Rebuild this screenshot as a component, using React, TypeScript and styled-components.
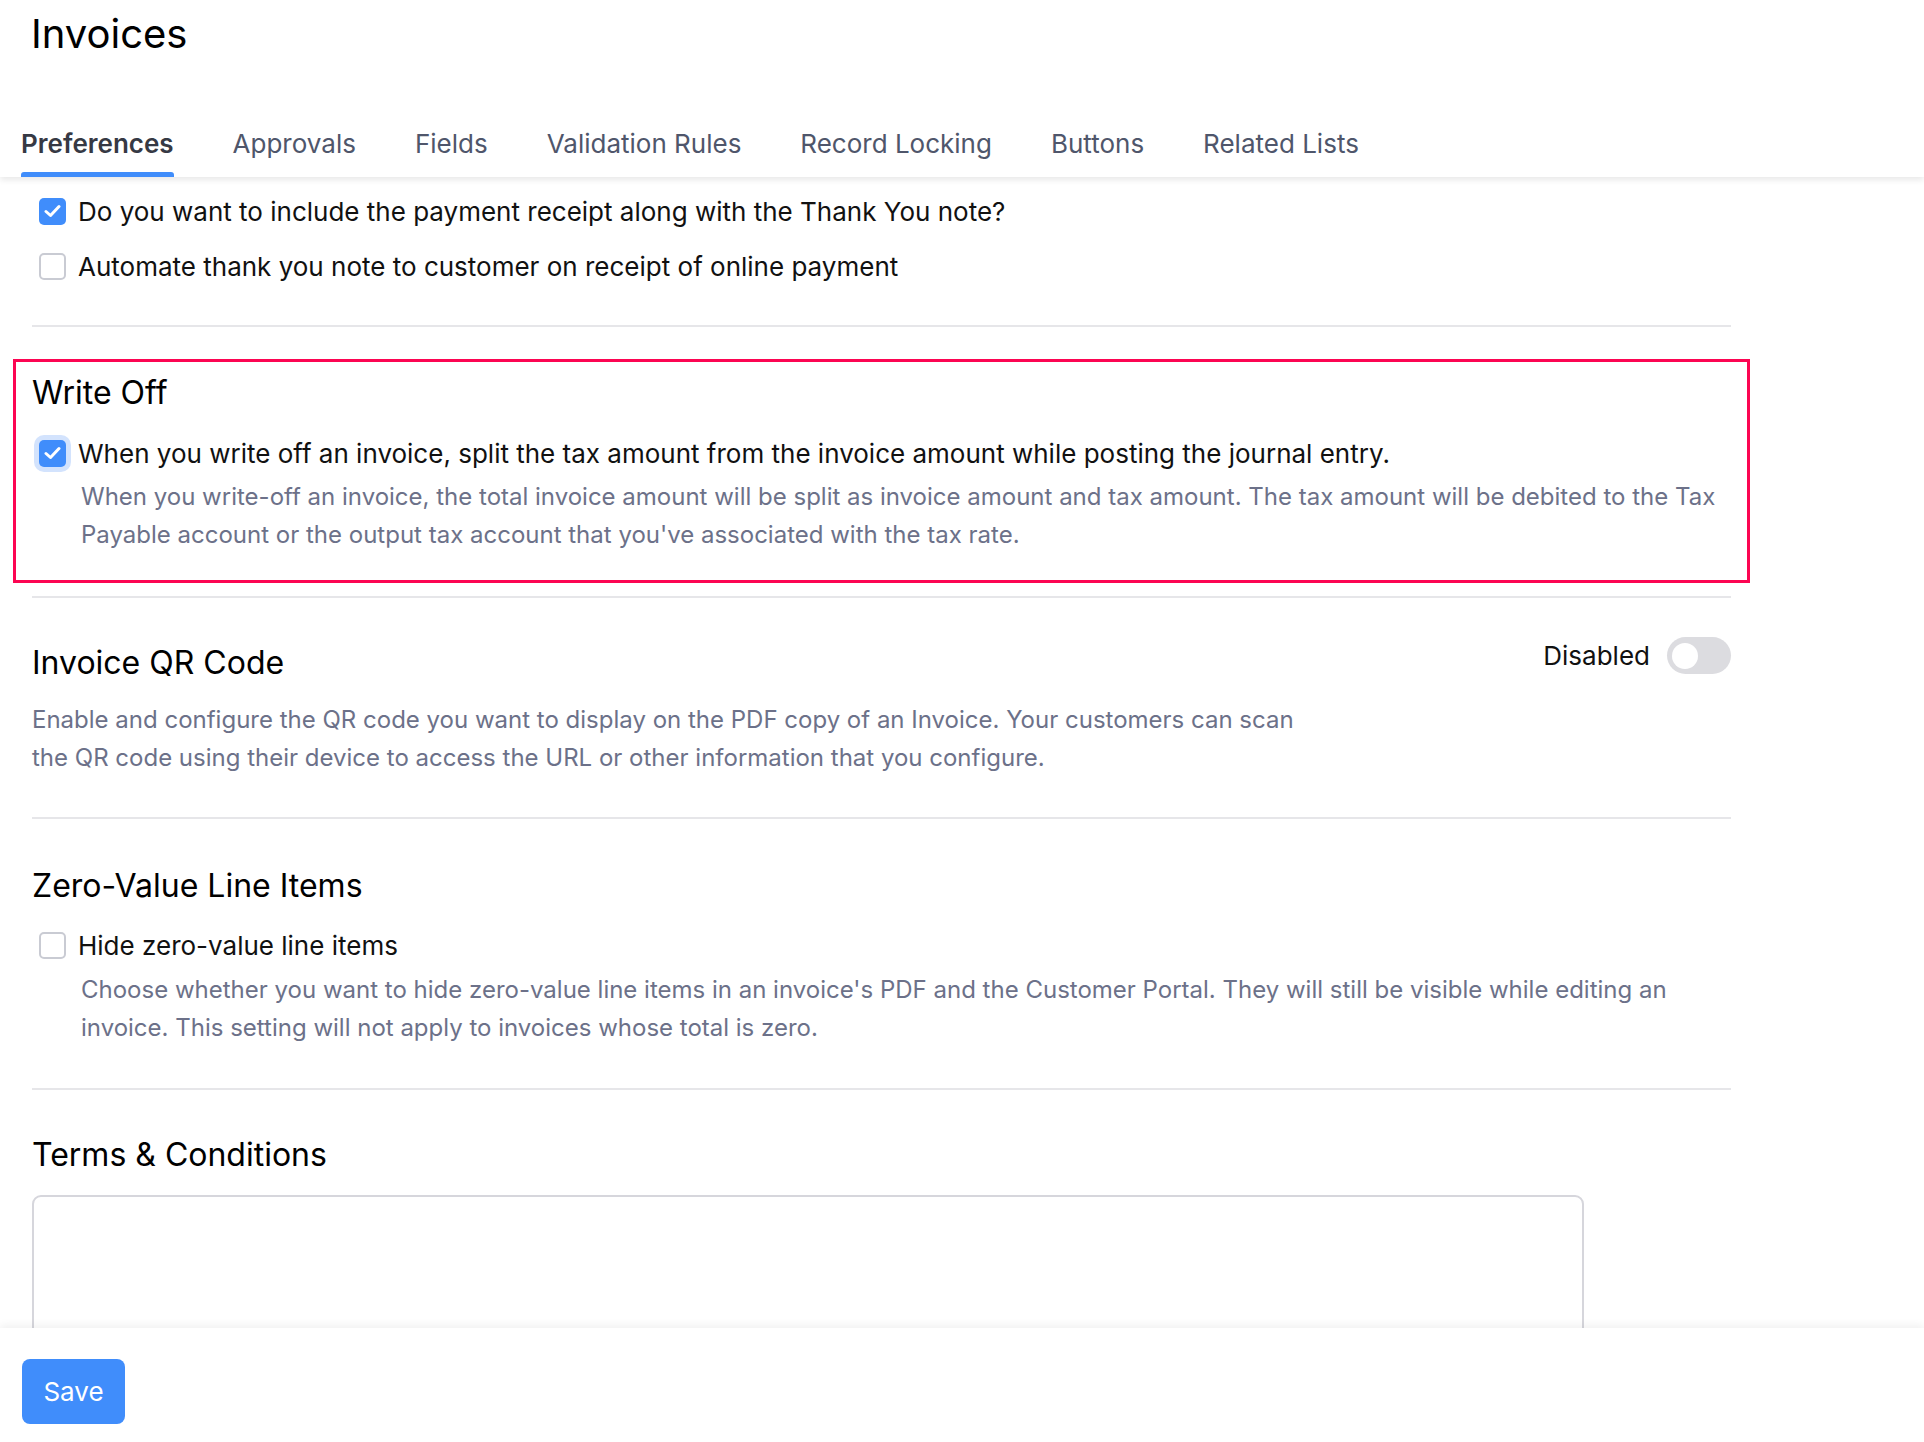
import React from "react";
import styled, { createGlobalStyle } from "styled-components";

const GlobalStyle = createGlobalStyle`
  html, body { margin: 0; padding: 0; background: #fff; }
  body {
    font-family: Inter, "Noto Sans", sans-serif;
    color: #111;
    -webkit-font-smoothing: antialiased;
  }
  * { box-sizing: border-box; }
`;

const Page = styled.div`
  height: 100vh;
  display: flex;
  flex-direction: column;
  overflow: hidden;
  background: #fff;
`;

const Header = styled.header`
  position: relative;
  z-index: 2;
  flex: none;
  background: #fff;
  box-shadow: 0 3px 6px rgba(0, 0, 0, 0.09);
`;

const Title = styled.h1`
  margin: 0;
  padding: 10px 0 0 31px;
  font-size: 40px;
  line-height: 48px;
  font-weight: 400;
  color: #000;
`;

const Tabs = styled.nav`
  display: flex;
  gap: 59px;
  padding-left: 21px;
  margin-top: 71px;
`;

const Tab = styled.div<{ $active?: boolean }>`
  display: flex;
  flex-direction: column;
  font-size: 26px;
  line-height: 30px;
  font-weight: ${(p) => (p.$active ? 600 : 400)};
  color: ${(p) => (p.$active ? "#363944" : "#4f566b")};
  white-space: nowrap;
  &::after {
    content: "";
    display: block;
    height: 5px;
    margin-top: 13px;
    border-radius: 3px 3px 0 0;
    background: ${(p) => (p.$active ? "#408dfb" : "transparent")};
  }
`;

const Content = styled.main`
  position: relative;
  z-index: 1;
  flex: 1;
  overflow: hidden;
  padding: 14px 0 0 32px;
`;

const Inner = styled.div`
  width: 1699px;
`;

const CheckList = styled.div`
  display: flex;
  flex-direction: column;
  gap: 15px;
`;

const CheckRow = styled.label<{ $mt?: number }>`
  display: flex;
  align-items: center;
  gap: 12px;
  height: 40px;
  padding-left: 7px;
  margin-top: ${(p) => p.$mt ?? 0}px;
  font-size: 26px;
  color: #111;
  white-space: nowrap;
`;

const Box = styled.span<{ $checked?: boolean; $focus?: boolean }>`
  flex: none;
  width: 27px;
  height: 27px;
  border-radius: 5px;
  display: flex;
  align-items: center;
  justify-content: center;
  background: ${(p) => (p.$checked ? "#408dfb" : "#fff")};
  border: ${(p) => (p.$checked ? "none" : "2px solid #c9cbd3")};
  box-shadow: ${(p) => (p.$focus ? "0 0 0 5px #d3e3fd" : "none")};
`;

const Divider = styled.hr<{ $mt: number; $mb: number }>`
  border: none;
  height: 2px;
  background: #e6e6e9;
  margin: ${(p) => p.$mt}px 0 ${(p) => p.$mb}px 0;
`;

const Highlight = styled.section`
  margin: 0 -19px;
  border: 3px solid #fc0552;
  padding: 11px 16px 26px 16px;
`;

const SectionTitle = styled.h2<{ $mt?: number }>`
  margin: ${(p) => p.$mt ?? 0}px 0 0 0;
  font-size: 32px;
  line-height: 40px;
  font-weight: 400;
  color: #000;
`;

const Desc = styled.div<{ $indent?: boolean; $mt?: number }>`
  margin: ${(p) => p.$mt ?? 0}px 0 0 0;
  padding-left: ${(p) => (p.$indent ? 49 : 0)}px;
  font-size: 24px;
  line-height: 38px;
  color: #6c7189;
`;

const Line = styled.span`
  display: block;
  white-space: nowrap;
`;

const SplitRow = styled.section`
  display: flex;
  align-items: flex-start;
`;

const MainCol = styled.div`
  flex: 1;
`;

const SideCol = styled.div`
  flex: none;
  display: flex;
  justify-content: flex-end;
`;

const ToggleGroup = styled.div`
  display: flex;
  align-items: center;
  gap: 17px;
  font-size: 26px;
  color: #111;
`;

const Toggle = styled.span`
  width: 64px;
  height: 37px;
  border-radius: 19px;
  background: #dcdce0;
  display: flex;
  align-items: center;
  padding-left: 5px;
  &::before {
    content: "";
    width: 26px;
    height: 26px;
    border-radius: 50%;
    background: #fff;
  }
`;

const TextArea = styled.textarea`
  display: block;
  margin-top: 20px;
  width: 1552px;
  height: 260px;
  border: 2px solid #d6d6dc;
  border-radius: 9px;
  resize: none;
  outline: none;
  font-family: inherit;
`;

const Footer = styled.footer`
  position: relative;
  z-index: 3;
  flex: none;
  height: 114px;
  padding: 31px 0 0 22px;
  background: #fff;
  box-shadow: 0 -3px 8px rgba(0, 0, 0, 0.06);
`;

const SaveButton = styled.button`
  width: 103px;
  height: 65px;
  border: none;
  border-radius: 8px;
  background: #408dfb;
  color: #fff;
  font-family: inherit;
  font-size: 26px;
  cursor: pointer;
`;

const Check = () => (
  <svg width="17" height="14" viewBox="0 0 17 14" fill="none">
    <polyline
      points="2,7.5 6.5,11.5 15,2.5"
      stroke="#fff"
      strokeWidth="3"
      strokeLinecap="round"
      strokeLinejoin="round"
    />
  </svg>
);

const Checkbox = ({ checked, focus }: { checked?: boolean; focus?: boolean }) => (
  <Box $checked={checked} $focus={focus}>
    {checked && <Check />}
  </Box>
);

const tabs = [
  "Preferences",
  "Approvals",
  "Fields",
  "Validation Rules",
  "Record Locking",
  "Buttons",
  "Related Lists",
];

export default function App() {
  return (
    <Page>
      <GlobalStyle />
      <Header>
        <Title>Invoices</Title>
        <Tabs>
          {tabs.map((t, i) => (
            <Tab key={t} $active={i === 0}>
              {t}
            </Tab>
          ))}
        </Tabs>
      </Header>
      <Content>
        <Inner>
          <CheckList>
            <CheckRow>
              <Checkbox checked />
              Do you want to include the payment receipt along with the Thank You note?
            </CheckRow>
            <CheckRow>
              <Checkbox />
              Automate thank you note to customer on receipt of online payment
            </CheckRow>
          </CheckList>

          <Divider $mt={39} $mb={32} />

          <Highlight>
            <SectionTitle>Write Off</SectionTitle>
            <CheckRow $mt={20}>
              <Checkbox checked focus />
              When you write off an invoice, split the tax amount from the invoice amount while posting the journal entry.
            </CheckRow>
            <Desc $indent $mt={5}>
              <Line>
                When you write-off an invoice, the total invoice amount will be split as invoice amount and tax amount. The tax amount will be debited to the Tax
              </Line>
              <Line>Payable account or the output tax account that you've associated with the tax rate.</Line>
            </Desc>
          </Highlight>

          <Divider $mt={13} $mb={39} />

          <SplitRow>
            <MainCol>
              <SectionTitle $mt={6}>Invoice QR Code</SectionTitle>
              <Desc $mt={18}>
                <Line>
                  Enable and configure the QR code you want to display on the PDF copy of an Invoice. Your customers can scan
                </Line>
                <Line>the QR code using their device to access the URL or other information that you configure.</Line>
              </Desc>
            </MainCol>
            <SideCol>
              <ToggleGroup>
                Disabled
                <Toggle />
              </ToggleGroup>
            </SideCol>
          </SplitRow>

          <Divider $mt={40} $mb={47} />

          <SectionTitle>Zero-Value Line Items</SectionTitle>
          <CheckRow $mt={19}>
            <Checkbox />
            Hide zero-value line items
          </CheckRow>
          <Desc $indent $mt={6}>
            <Line>
              Choose whether you want to hide zero-value line items in an invoice's PDF and the Customer Portal. They will still be visible while editing an
            </Line>
            <Line>invoice. This setting will not apply to invoices whose total is zero.</Line>
          </Desc>

          <Divider $mt={41} $mb={45} />

          <SectionTitle>Terms &amp; Conditions</SectionTitle>
          <TextArea />
        </Inner>
      </Content>
      <Footer>
        <SaveButton>Save</SaveButton>
      </Footer>
    </Page>
  );
}
